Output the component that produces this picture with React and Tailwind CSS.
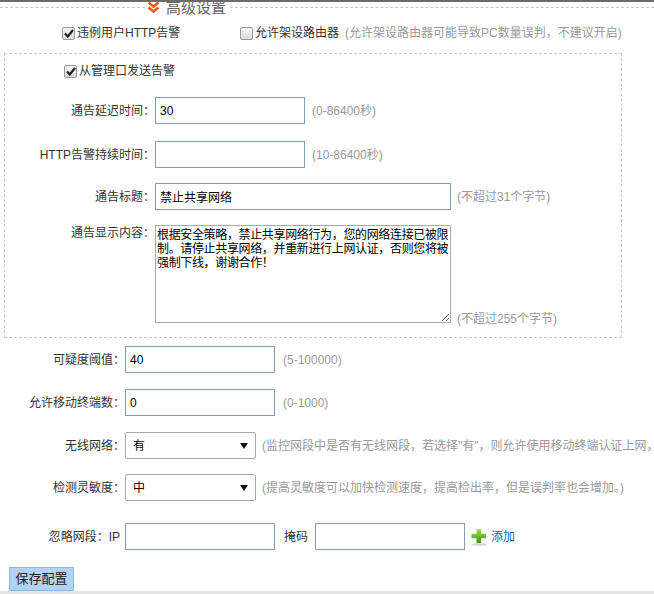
import React from 'react';

const font = "font-['Liberation_Sans','Noto_Sans_CJK_SC',sans-serif]";

const Check = ({ checked }) => (
    <span className="flex w-[13px] h-[13px] shrink-0 items-center justify-center rounded-[2px] border border-[#9a9a9a] bg-gradient-to-b from-[#f6f6f6] to-[#d9d9d9]">
        {checked && (
            <svg width="10" height="9" viewBox="0 0 10 9">
                <path d="M1 4.5 L3.8 7.5 L9 1" fill="none" stroke="#222" strokeWidth="2.2" />
            </svg>
        )}
    </span>
);

const TextInput = ({ value, className = 'w-[150px]' }) => (
    <input
        type="text"
        defaultValue={value}
        className={`${className} h-[27px] shrink-0 border border-[#7f9db9] bg-white px-[4px] text-[12px] text-black outline-none`}
    />
);

const Hint = ({ children, className = '' }) => (
    <span className={`text-[12px] leading-[14px] text-[#999] whitespace-nowrap ${className}`}>{children}</span>
);

const Label = ({ children, className }) => (
    <span className={`${className} shrink-0 text-right whitespace-nowrap`}>{children}</span>
);

const Select = ({ value }) => (
    <div className="flex w-[131px] h-[27px] shrink-0 items-center justify-between rounded-[2px] border border-[#a9a9a9] bg-white pl-[7px] pr-[7px]">
        <span className="text-[12px] text-black">{value}</span>
        <svg width="8" height="6" viewBox="0 0 8 6">
            <path d="M0 0 H8 L4 6 Z" fill="#111" />
        </svg>
    </div>
);

const notice = "根据安全策略，禁止共享网络行为，您的网络连接已被限\n制。请停止共享网络，并重新进行上网认证，否则您将被\n强制下线，谢谢合作！";

const App = () => {
    return (
        <div className={`relative w-[654px] h-[594px] overflow-hidden bg-white text-[12px] leading-[14px] text-[#333] ${font}`}>
            {/* top bar */}
            <div className="absolute top-0 left-0 right-0 h-[2px] bg-[#6b6b6b] z-10"></div>

            {/* section title */}
            <div className="flex h-[15px] items-center">
                <div className="w-[145px] border-t border-dashed border-[#c8c8c8]"></div>
                <svg className="ml-[2px]" width="13" height="13" viewBox="0 0 13 13">
                    <path d="M1.5 1.5 L6.5 5.5 L11.5 1.5" fill="none" stroke="#ff5a1a" strokeWidth="2.6" />
                    <path d="M1.5 6.5 L6.5 10.5 L11.5 6.5" fill="none" stroke="#ff5a1a" strokeWidth="2.6" />
                </svg>
                <span className="ml-[6px] text-[15px] leading-[15px] text-[#666]">高级设置</span>
                <div className="ml-[4px] flex-1 border-t border-dashed border-[#c8c8c8]"></div>
            </div>

            {/* checkbox row */}
            <div className="mt-[10px] flex h-[16px] items-center">
                <div className="ml-[62px] flex w-[178px] shrink-0 items-center">
                    <Check checked />
                    <span className="ml-[2px]">违例用户HTTP告警</span>
                </div>
                <Check />
                <span className="ml-[2px] shrink-0">允许架设路由器</span>
                <Hint className="ml-[6px]">(允许架设路由器可能导致PC数量误判，不建议开启)</Hint>
            </div>

            {/* dashed group */}
            <div className="ml-[4px] mt-[12px] w-[618px] h-[285px] border border-dashed border-[#c8c8c8]">
                <div className="mt-[9px] ml-[59px] flex h-[16px] items-center">
                    <Check checked />
                    <span className="ml-[2px]">从管理口发送告警</span>
                </div>

                <div className="mt-[18px] flex items-center">
                    <Label className="w-[150px]">通告延迟时间：</Label>
                    <TextInput value="30" />
                    <Hint className="ml-[7px]">(0-86400秒)</Hint>
                </div>

                <div className="mt-[17px] flex items-center">
                    <Label className="w-[150px]">HTTP告警持续时间：</Label>
                    <TextInput value="" />
                    <Hint className="ml-[7px]">(10-86400秒)</Hint>
                </div>

                <div className="mt-[15px] flex items-center">
                    <Label className="w-[150px]">通告标题：</Label>
                    <TextInput value="禁止共享网络" className="w-[296px]" />
                    <Hint className="ml-[6px]">(不超过31个字节)</Hint>
                </div>

                <div className="mt-[15px] flex items-end">
                    <Label className="w-[150px] self-start mt-[1px]">通告显示内容：</Label>
                    <textarea
                        wrap="off"
                        className="w-[296px] h-[98px] shrink-0 overflow-hidden border border-[#a9a9a9] px-[1px] py-[1px] font-['Noto_Sans_CJK_SC',sans-serif] text-[12px] leading-[14px] tracking-[-0.35px] text-black outline-none"
                        defaultValue={notice}
                    />
                    <Hint className="ml-[6px] mb-[-3px]">(不超过255个字节)</Hint>
                </div>
            </div>

            {/* outer rows */}
            <div className="mt-[8px] flex items-center">
                <Label className="w-[125px]">可疑度阈值：</Label>
                <TextInput value="40" />
                <Hint className="ml-[8px]">(5-100000)</Hint>
            </div>

            <div className="mt-[16px] flex items-center">
                <Label className="w-[125px]">允许移动终端数：</Label>
                <TextInput value="0" />
                <Hint className="ml-[8px]">(0-1000)</Hint>
            </div>

            <div className="mt-[16px] flex items-center overflow-hidden">
                <Label className="w-[125px]">无线网络：</Label>
                <Select value="有" />
                <Hint className="ml-[6px]">(监控网段中是否有无线网段，若选择"有"，则允许使用移动终端认证上网，否则仅允许PC认证上网。)</Hint>
            </div>

            <div className="mt-[15px] flex items-center">
                <Label className="w-[125px]">检测灵敏度：</Label>
                <Select value="中" />
                <Hint className="ml-[6px]">(提高灵敏度可以加快检测速度，提高检出率，但是误判率也会增加。)</Hint>
            </div>

            <div className="mt-[22px] flex items-center">
                <Label className="w-[120px]">忽略网段：IP</Label>
                <span className="ml-[5px] flex"><TextInput value="" /></span>
                <span className="ml-[9px]">掩码</span>
                <span className="ml-[7px] flex"><TextInput value="" /></span>
                <svg className="ml-[5px]" width="18" height="18" viewBox="0 0 18 18">
                    <defs>
                        <linearGradient id="plusG" x1="0" y1="0" x2="0" y2="1">
                            <stop offset="0" stopColor="#a6dc5c" />
                            <stop offset="1" stopColor="#3e9514" />
                        </linearGradient>
                    </defs>
                    <ellipse cx="9" cy="16.5" rx="8" ry="1.3" fill="#d6d6d6" />
                    <path d="M6.5 1 H11 V5.8 H16 V10.3 H11 V15 H6.5 V10.3 H1.5 V5.8 H6.5 Z" fill="url(#plusG)" />
                </svg>
                <span className="ml-[3px] text-[#1f5fa6]">添加</span>
            </div>

            <button className="ml-[9px] mt-[17px] flex w-[65px] h-[24px] items-center justify-center border border-[#8fb6dd] bg-[#b0d3f6] text-[13px] text-[#222]">
                保存配置
            </button>
            <div className="h-[3px] bg-[#e3e3e3]"></div>
        </div>
    );
};

export default App;
